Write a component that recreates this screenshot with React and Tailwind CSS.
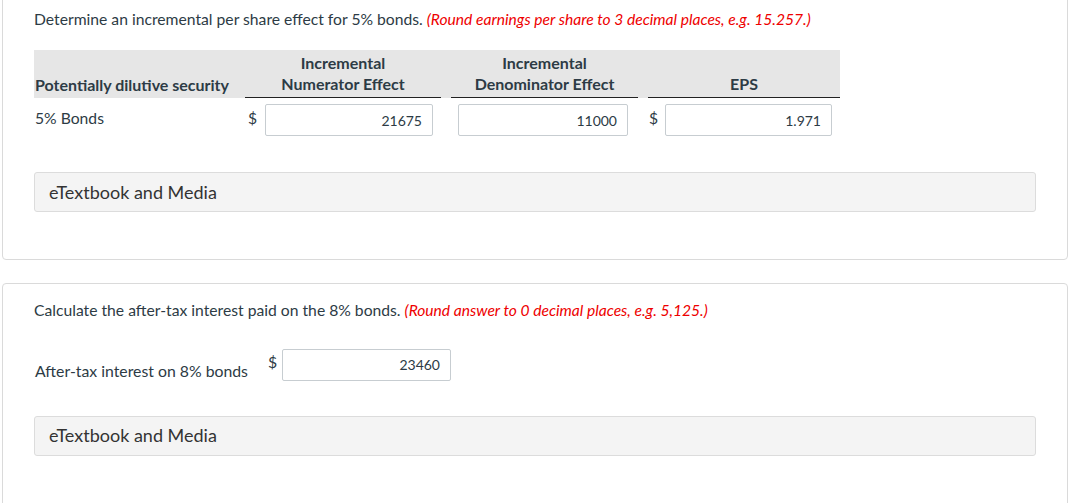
import React from "react";

const font = { fontFamily: "Lato, 'Open Sans', sans-serif" };

const Field = ({ value, className }) => (
  <div
    className={`h-[32px] border border-[#c7cdd1] bg-white rounded-[2px] flex items-center justify-end pr-[10px] text-[14px] text-[#2d3b45] ${className}`}
  >
    {value}
  </div>
);

const Media = () => (
  <div className="h-[40px] bg-[#f4f4f4] border border-[#dcdcdc] rounded-[3px] flex items-center pl-[14px] text-[18px] text-[#333]">
    eTextbook and Media
  </div>
);

export default function App() {
  return (
    <div className="w-[1082px] h-[503px] overflow-hidden bg-white text-[#2d3b45]" style={font}>
      {/* first question */}
      <div className="ml-[2px] w-[1066px] -mt-[10px] h-[270px] border border-[#dadada] rounded-[4px] px-[31px] pt-[17px]">
        <p className="text-[15.7px] leading-[22px]">
          Determine an incremental per share effect for 5% bonds.{" "}
          <i className="text-[#ee0000] text-[15.6px]">
            (Round earnings per share to 3 decimal places, e.g. 15.257.)
          </i>
        </p>

        <div className="mt-[20px] w-[806px]">
          <div className="flex items-end h-[48px] bg-[#e6e6e6] text-[16px] font-bold leading-[21px]">
            <div className="w-[211px] pl-[1px] pb-[3px]">Potentially dilutive security</div>
            <div className="w-[196px] text-center border-b-[1.5px] border-[#222] pb-[3px]">
              Incremental
              <br />
              Numerator Effect
            </div>
            <div className="w-[187px] ml-[10px] text-center border-b-[1.5px] border-[#222] pb-[3px]">
              Incremental
              <br />
              Denominator Effect
            </div>
            <div className="w-[192px] ml-[10px] text-center border-b-[1.5px] border-[#222] pb-[3px]">
              EPS
            </div>
          </div>

          <div className="flex items-center mt-[6px] text-[15.7px]">
            <div className="w-[211px] pl-[1px] -mt-[3px]">5% Bonds</div>
            <div className="w-[196px] flex items-center">
              <span className="w-[20px] pl-[3px] -mt-[3px]">$</span>
              <Field value="21675" className="w-[168px]" />
            </div>
            <div className="w-[187px] ml-[10px] pl-[7px]">
              <Field value="11000" className="w-[170px]" />
            </div>
            <div className="w-[192px] ml-[10px] flex items-center">
              <span className="w-[17px] pl-[1px] -mt-[3px]">$</span>
              <Field value="1.971" className="w-[167px]" />
            </div>
          </div>
        </div>

        <div className="mt-[36px]">
          <Media />
        </div>
      </div>

      {/* second question */}
      <div className="ml-[2px] w-[1066px] mt-[23px] h-[240px] border border-[#dadada] rounded-[4px] px-[31px] pt-[15px]">
        <p className="text-[15.7px] leading-[22px]">
          Calculate the after-tax interest paid on the 8% bonds.{" "}
          <i className="text-[#ee0000] text-[15.6px]">(Round answer to 0 decimal places, e.g. 5,125.)</i>
        </p>

        <div className="flex items-center mt-[26px] text-[15.8px]">
          <span className="w-[234px] pl-[1px] mt-[12px]">After-tax interest on 8% bonds</span>
          <span className="w-[14px] -mt-[6px]">$</span>
          <Field value="23460" className="w-[169px]" />
        </div>

        <div className="mt-[33px]">
          <Media />
        </div>
      </div>
    </div>
  );
}
